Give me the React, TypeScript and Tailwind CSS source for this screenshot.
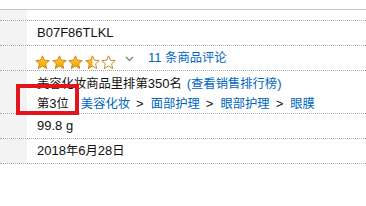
import React from "react";

const CJK_SRC = "[\\u3000-\\u9fff\\uff00-\\uffef]+";

function T({ s }: { s: string }) {
  const parts: React.ReactNode[] = [];
  let last = 0;
  let m: RegExpExecArray | null;
  const re = new RegExp(CJK_SRC, "g");
  let i = 0;
  while ((m = re.exec(s))) {
    if (m.index > last) parts.push(<span key={i++}>{s.slice(last, m.index)}</span>);
    parts.push(
      <span key={i++} className="text-[12.3px]">
        {m[0]}
      </span>
    );
    last = m.index + m[0].length;
  }
  if (last < s.length) parts.push(<span key={i++}>{s.slice(last)}</span>);
  return <>{parts}</>;
}

function Star({ fill }: { fill: "full" | "half" | "empty" }) {
  const d =
    "M7.5 0.8 L9.4 5.2 L14.2 5.6 L10.6 8.8 L11.7 13.5 L7.5 11 L3.3 13.5 L4.4 8.8 L0.8 5.6 L5.6 5.2 Z";
  return (
    <svg width="15" height="14" viewBox="0 0 15 14">
      <defs>
        <linearGradient id="g" x1="0" y1="0" x2="0" y2="1">
          <stop offset="0" stopColor="#ffce3d" />
          <stop offset="1" stopColor="#f7a100" />
        </linearGradient>
        <clipPath id="half">
          <rect x="0" y="0" width="7.5" height="14" />
        </clipPath>
      </defs>
      {fill === "full" && <path d={d} fill="url(#g)" stroke="#c97a0c" strokeWidth="0.9" strokeLinejoin="round" />}
      {fill === "half" && (
        <>
          <path d={d} fill="#fff" />
          <path d={d} fill="url(#g)" clipPath="url(#half)" />
          <path d={d} fill="none" stroke="#c97a0c" strokeWidth="0.9" strokeLinejoin="round" />
        </>
      )}
      {fill === "empty" && <path d={d} fill="#fff" stroke="#b8860b" strokeWidth="0.9" strokeLinejoin="round" />}
    </svg>
  );
}

function Row({ children, tall }: { children: React.ReactNode; tall?: boolean }) {
  return (
    <div className="flex border-b border-dotted border-[#a8a8a8]">
      <div className="w-[27px] shrink-0 bg-[#f3f3f3]" />
      <div
        className={
          tall
            ? "pl-[10px] pt-[3px] pb-[2px] leading-[19px] h-[42px]"
            : "pl-[10px] h-[24px] flex items-center"
        }
      >
        {children}
      </div>
    </div>
  );
}

function Sep() {
  return <span className="ml-[6px] mr-[7px] text-[#111]">&gt;</span>;
}

export default function App() {
  return (
    <div
      className="relative w-[366px] h-[206px] bg-white text-[13px] text-[#111] overflow-hidden"
      style={{ fontFamily: '"Liberation Sans", Arial, "Noto Sans CJK SC", sans-serif' }}
    >
      <div className="h-[9px]" />
      <div className="border-t border-[#c4c4c4]" />
      <div className="flex border-b border-dotted border-[#a8a8a8]">
        <div className="w-[27px] shrink-0 bg-[#f3f3f3] h-[10px]" />
      </div>
      <Row>B07F86TLKL</Row>
      <Row>
        <div className="flex items-center">
          <div className="flex gap-[1.5px] mt-[7px] ml-[-2px]">
            <Star fill="full" />
            <Star fill="full" />
            <Star fill="full" />
            <Star fill="half" />
            <Star fill="empty" />
          </div>
          <svg width="9" height="6" viewBox="0 0 9 6" className="ml-[9px] mt-[1px]">
            <path d="M1 1 L4.5 4.5 L8 1" fill="none" stroke="#777" strokeWidth="1.2" />
          </svg>
          <span className="ml-[14px] text-[#0066c0]">
            <T s="11 条商品评论" />
          </span>
        </div>
      </Row>
      <Row tall>
        <div className="whitespace-nowrap">
          <T s="美容化妆商品里排第350名" />
          <span className="ml-[5px] text-[#0066c0]">
            <T s="(查看销售排行榜)" />
          </span>
        </div>
        <div className="whitespace-nowrap">
          <T s="第3位" />
          <span className="ml-[12px] text-[#0066c0]">
            <T s="美容化妆" />
          </span>
          <Sep />
          <span className="text-[#0066c0]">
            <T s="面部护理" />
          </span>
          <Sep />
          <span className="text-[#0066c0]">
            <T s="眼部护理" />
          </span>
          <Sep />
          <span className="text-[#0066c0]">
            <T s="眼膜" />
          </span>
        </div>
      </Row>
      <Row>99.8 g</Row>
      <Row>
        <T s="2018年6月28日" />
      </Row>
      <div className="absolute left-[16px] top-[84px] w-[63px] h-[31px] border-[4px] border-[#e3141b]" />
    </div>
  );
}
